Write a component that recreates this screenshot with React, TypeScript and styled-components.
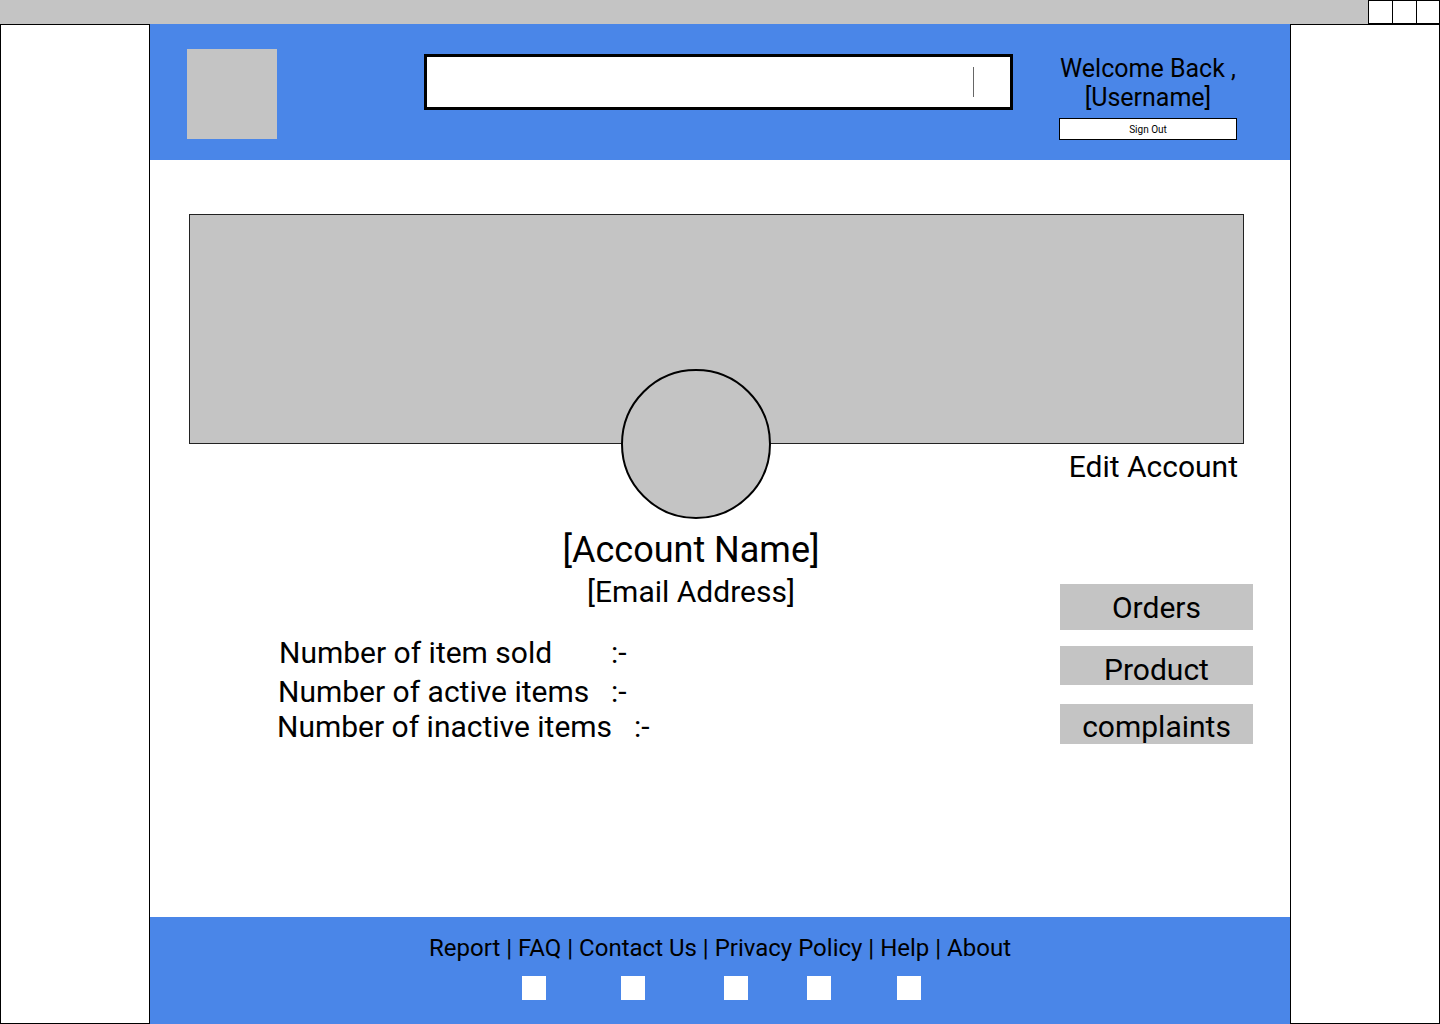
import React from "react";
import styled, { createGlobalStyle } from "styled-components";

const GlobalStyle = createGlobalStyle`
  * {
    box-sizing: border-box;
  }
  body {
    margin: 0;
    font-family: Roboto, "Liberation Sans", Arial, sans-serif;
    color: #000;
    background: #fff;
  }
`;

const Page = styled.div`
  width: 1440px;
  height: 1024px;
  display: flex;
  flex-direction: column;
  overflow: hidden;
`;

const TopBar = styled.div`
  height: 24px;
  background: #c4c4c4;
  display: flex;
  justify-content: flex-end;
`;

const WindowButton = styled.div<{ $last?: boolean }>`
  width: 24px;
  height: 24px;
  background: #fff;
  border: 1px solid #000;
  border-right: ${(p) => (p.$last ? "1px solid #000" : "none")};
`;

const Body = styled.div`
  flex: 1;
  display: flex;
`;

const SidePanel = styled.aside`
  width: 150px;
  background: #fff;
  border: 1px solid #000;
`;

const Main = styled.main`
  width: 1140px;
  display: flex;
  flex-direction: column;
`;

const Header = styled.header`
  height: 136px;
  background: #4a86e8;
  display: flex;
  align-items: flex-start;
  padding: 25px 0 0 37px;
`;

const Logo = styled.div`
  width: 90px;
  height: 90px;
  background: #c4c4c4;
`;

const SearchBox = styled.div`
  width: 589px;
  height: 56px;
  margin: 5px 0 0 147px;
  background: #fff;
  border: 3px solid #000;
  display: flex;
  align-items: center;
  justify-content: flex-end;
  padding-right: 36px;
`;

const Caret = styled.span`
  width: 1px;
  height: 30px;
  background: #666;
`;

const Welcome = styled.div`
  width: 178px;
  margin: 5px 0 0 46px;
  display: flex;
  flex-direction: column;
  align-items: center;
  font-size: 25px;
  line-height: 29px;
  text-align: center;
  white-space: nowrap;
`;

const SignOut = styled.button`
  width: 178px;
  height: 22px;
  margin-top: 6px;
  background: #fff;
  border: 1px solid #000;
  font-family: inherit;
  font-size: 10px;
  color: #000;
  padding: 0;
`;

const Content = styled.section`
  flex: 1;
  display: flex;
  flex-direction: column;
`;

const Cover = styled.div`
  width: 1055px;
  height: 230px;
  margin: 54px 0 0 39px;
  background: #c4c4c4;
  border: 1px solid #222;
`;

const Profile = styled.div`
  display: flex;
`;

const LeftBlock = styled.div`
  width: 910px;
  display: flex;
  flex-direction: column;
`;

const Identity = styled.div`
  width: 300px;
  margin-left: 391px;
  display: flex;
  flex-direction: column;
  align-items: center;
`;

const Avatar = styled.div`
  width: 150px;
  height: 150px;
  margin: -75px 0 0 10px;
  border-radius: 50%;
  background: #c4c4c4;
  border: 2px solid #000;
`;

const AccountName = styled.div`
  margin-top: 10px;
  font-size: 36px;
  line-height: 43px;
  white-space: nowrap;
`;

const Email = styled.div`
  margin-top: 2px;
  font-size: 30px;
  line-height: 35px;
  white-space: nowrap;
`;

const Stats = styled.div`
  margin-top: 23px;
  display: flex;
  flex-direction: column;
`;

const StatRow = styled.div<{ $indent: number; $lift: number }>`
  display: flex;
  padding-left: ${(p) => p.$indent}px;
  margin-top: ${(p) => p.$lift}px;
  font-size: 30px;
  line-height: 38px;
  white-space: nowrap;
`;

const StatLabel = styled.span<{ $width: number }>`
  width: ${(p) => p.$width}px;
`;

const RightBlock = styled.div`
  width: 193px;
  display: flex;
  flex-direction: column;
`;

const EditLink = styled.a`
  margin-top: 6px;
  padding-right: 15px;
  text-align: right;
  font-size: 30px;
  line-height: 34px;
  color: #000;
  text-decoration: none;
  white-space: nowrap;
`;

const NavButton = styled.button<{ $height: number; $gap: number; $shift: number }>`
  height: ${(p) => p.$height}px;
  margin-top: ${(p) => p.$gap}px;
  padding: ${(p) => p.$shift}px 0 0;
  background: #c4c4c4;
  border: none;
  font-family: inherit;
  font-size: 30px;
  line-height: 34px;
  color: #000;
`;

const Footer = styled.footer`
  height: 107px;
  background: #4a86e8;
  padding-top: 17px;
  display: flex;
  flex-direction: column;
`;

const FooterLinks = styled.div`
  text-align: center;
  font-size: 24px;
  line-height: 28px;
`;

const Socials = styled.div`
  display: flex;
  margin: 14px 0 0 372px;
`;

const SocialIcon = styled.span<{ $gap: number }>`
  width: 24px;
  height: 24px;
  margin-left: ${(p) => p.$gap}px;
  background: #fff;
`;

const stats = [
  { label: "Number of item sold", indent: 129, width: 332, lift: 2 },
  { label: "Number of active items", indent: 128, width: 333, lift: 1 },
  { label: "Number of inactive items", indent: 127, width: 357, lift: -3 },
];

const navItems = [
  { label: "Orders", height: 46, gap: 100, shift: 2 },
  { label: "Product", height: 39, gap: 16, shift: 7 },
  { label: "complaints", height: 40, gap: 19, shift: 6 },
];

const socialGaps = [0, 75, 79, 59, 66];

const App = () => {
  return (
    <>
      <GlobalStyle />
      <Page>
        <TopBar>
          <WindowButton />
          <WindowButton />
          <WindowButton $last />
        </TopBar>
        <Body>
          <SidePanel />
          <Main>
            <Header>
              <Logo />
              <SearchBox>
                <Caret />
              </SearchBox>
              <Welcome>
                <span>Welcome Back ,</span>
                <span>[Username]</span>
                <SignOut>Sign Out</SignOut>
              </Welcome>
            </Header>
            <Content>
              <Cover />
              <Profile>
                <LeftBlock>
                  <Identity>
                    <Avatar />
                    <AccountName>[Account Name]</AccountName>
                    <Email>[Email Address]</Email>
                  </Identity>
                  <Stats>
                    {stats.map((s) => (
                      <StatRow key={s.label} $indent={s.indent} $lift={s.lift}>
                        <StatLabel $width={s.width}>{s.label}</StatLabel>
                        <span>:-</span>
                      </StatRow>
                    ))}
                  </Stats>
                </LeftBlock>
                <RightBlock>
                  <EditLink href="#">Edit Account</EditLink>
                  {navItems.map((n) => (
                    <NavButton
                      key={n.label}
                      $height={n.height}
                      $gap={n.gap}
                      $shift={n.shift}
                    >
                      {n.label}
                    </NavButton>
                  ))}
                </RightBlock>
              </Profile>
            </Content>
            <Footer>
              <FooterLinks>
                Report | FAQ | Contact Us | Privacy Policy | Help | About
              </FooterLinks>
              <Socials>
                {socialGaps.map((g, i) => (
                  <SocialIcon key={i} $gap={g} />
                ))}
              </Socials>
            </Footer>
          </Main>
          <SidePanel />
        </Body>
      </Page>
    </>
  );
};

export default App;
